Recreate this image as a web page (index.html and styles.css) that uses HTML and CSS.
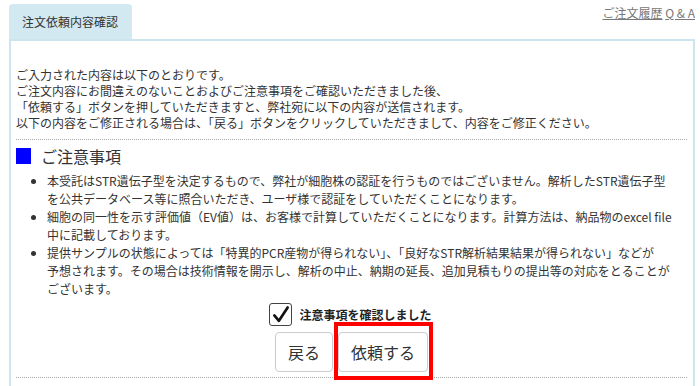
FILE: index.html
```html
<!DOCTYPE html>
<html lang="ja">
<head>
    <meta charset="UTF-8">
    <meta name="viewport" content="width=device-width, initial-scale=1.0">
    <title>注文依頼内容確認</title>
    <link rel="stylesheet" href="styles.css">
</head>
<body>

<div class="page">
    <div class="top">
        <div class="tab">注文依頼内容確認</div>
        <div class="links">
            <a href="#">ご注文履歴</a>
            <a href="#">Q &amp; A</a>
        </div>
    </div>

    <div class="box">
        <p class="intro">
            ご入力された内容は以下のとおりです。<br>
            ご注文内容にお間違えのないことおよびご注意事項をご確認いただきました後、<br>
            「依頼する」ボタンを押していただきますと、弊社宛に以下の内容が送信されます。<br>
            以下の内容をご修正される場合は、「戻る」ボタンをクリックしていただきまして、内容をご修正ください。
        </p>

        <h2 class="notice-title"><span class="square"></span>ご注意事項</h2>
        <ul class="notice-list">
            <li>本受託はSTR遺伝子型を決定するもので、弊社が細胞株の認証を行うものではございません。解析したSTR遺伝子型<br>を公共データベース等に照合いただき、ユーザ様で認証をしていただくことになります。</li>
            <li>細胞の同一性を示す評価値（EV値）は、お客様で計算していただくことになります。計算方法は、納品物のexcel file<br>中に記載しております。</li>
            <li>提供サンプルの状態によっては「特異的PCR産物が得られない」、「良好なSTR解析結果結果が得られない」などが<br>予想されます。その場合は技術情報を開示し、解析の中止、納期の延長、追加見積もりの提出等の対応をとることが<br>ございます。</li>
        </ul>

        <label class="confirm">
            <span class="checkbox">
                <svg viewBox="0 0 24 24" width="20" height="20"><path d="M4 12.5 L9.5 19 L20 3" fill="none" stroke="#111" stroke-width="3.2" stroke-linecap="round" stroke-linejoin="round"/></svg>
            </span>
            注意事項を確認しました
        </label>

        <div class="buttons">
            <button class="btn">戻る</button>
            <span class="highlight"><button class="btn">依頼する</button></span>
        </div>
    </div>
</div>

</body>
</html>
```

FILE: styles.css
```css
body {
    margin: 0;
    padding: 0;
    font-family: 'Noto Sans CJK JP', 'Noto Sans', sans-serif;
    color: #333;
    background: #ffffff;
    overflow: hidden;
}
.page {
    padding: 4px 5px 0 9px;
}
.top {
    display: flex;
    justify-content: space-between;
}
.tab {
    width: 110px;
    height: 35px;
    padding-left: 13px;
    line-height: 35px;
    font-size: 12px;
    background: #d3e9f1;
    border-radius: 4px 4px 0 0;
}
.links {
    font-size: 12px;
    line-height: 18px;
}
.links a {
    color: #777;
    text-decoration: underline;
}
.box {
    box-sizing: border-box;
    height: 347px;
    border: 2px solid #cce5ef;
    border-bottom: none;
    padding: 26px 6px 0 5px;
}
.intro {
    margin: 0;
    padding-bottom: 8px;
    font-size: 12px;
    line-height: 16px;
    border-bottom: 1px dotted #aaa;
}
.notice-title {
    margin: 6px 0 0;
    display: flex;
    align-items: center;
    font-size: 16px;
    font-weight: normal;
    line-height: 20px;
}
.square {
    width: 15px;
    height: 16px;
    background: #0000ff;
    margin-right: 10px;
}
.notice-list {
    margin: 6px 0 0;
    padding-left: 31px;
    font-size: 12px;
    line-height: 18px;
    white-space: nowrap;
}
.confirm {
    margin-top: 5px;
    display: flex;
    justify-content: center;
    align-items: center;
    gap: 7px;
    font-size: 12px;
    font-weight: bold;
    color: #222;
    padding-right: 2px;
}
.checkbox {
    width: 21px;
    height: 21px;
    border: 1px solid #444;
    border-radius: 3px;
    display: flex;
    align-items: center;
    justify-content: center;
    background: #fff;
}
.buttons {
    margin-top: 6px;
    padding-bottom: 5px;
    display: flex;
    justify-content: center;
    gap: 5px;
    border-bottom: 1px dotted #aaa;
}
.btn {
    height: 40px;
    padding: 0 12px;
    font-family: inherit;
    font-size: 16px;
    color: #333;
    background: #ffffff;
    border: 1px solid #ccc;
    border-radius: 4px;
}
.highlight {
    position: relative;
    display: flex;
}
.highlight::after {
    content: '';
    position: absolute;
    top: -10px;
    left: -4px;
    right: -5px;
    bottom: -8px;
    border: 4px solid #ff0000;
    pointer-events: none;
}
```
